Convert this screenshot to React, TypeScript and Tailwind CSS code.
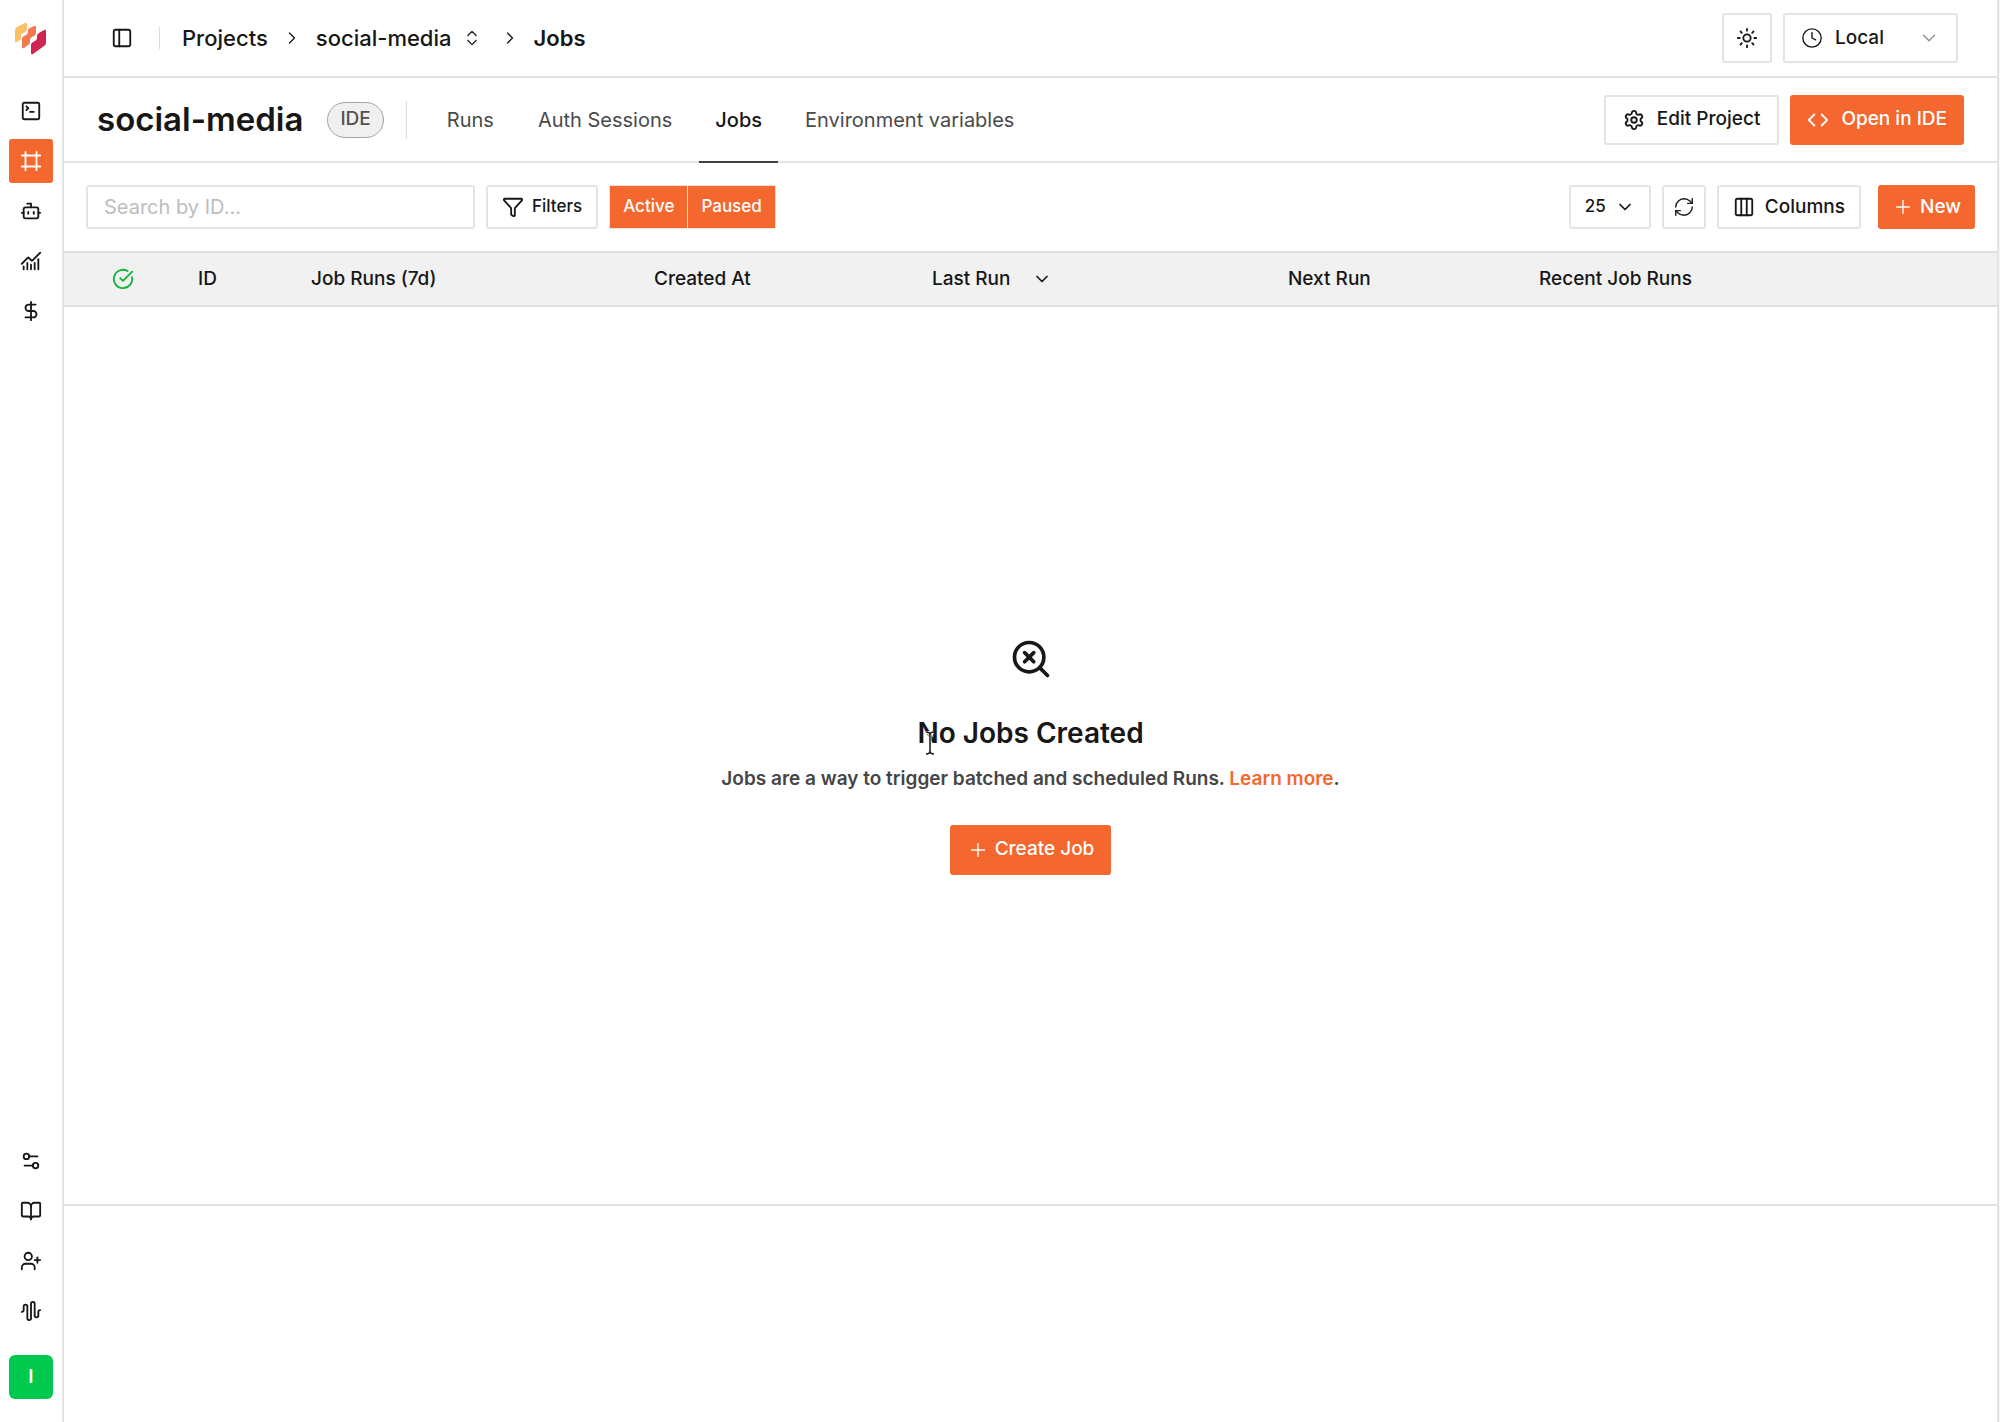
import React from 'react';
import {
  AudioWaveform,
  BookOpen,
  Bot,
  ChartNoAxesCombined,
  ChevronDown,
  ChevronRight,
  ChevronsUpDown,
  CircleCheckBig,
  Clock,
  Code,
  Columns3,
  DollarSign,
  Frame,
  Funnel,
  PanelLeft,
  Plus,
  RefreshCw,
  Settings,
  Settings2,
  SquareTerminal,
  Sun,
  UserPlus,
} from 'lucide-react';
import { cva } from 'class-variance-authority';
import { clsx } from 'clsx';

const button = cva('flex items-center justify-center rounded-[3px] font-medium', {
  variants: {
    variant: {
      outline: 'border-2 border-[#e4e4e4] bg-white text-[#171717]',
      primary: 'bg-[#f4672f] text-white',
    },
    size: {
      lg: 'h-[50px] px-[17px] text-[19px]',
      md: 'h-11 px-3.5 text-[19px]',
      sm: 'h-11 px-3.5 text-[17px]',
    },
  },
});

const mainNav = [
  { label: 'Playground', icon: SquareTerminal },
  { label: 'Projects', icon: Frame, active: true },
  { label: 'Agents', icon: Bot },
  { label: 'Usage', icon: ChartNoAxesCombined },
  { label: 'Billing', icon: DollarSign },
];

const footerNav = [
  { label: 'Settings', icon: Settings2 },
  { label: 'Docs', icon: BookOpen },
  { label: 'Invite', icon: UserPlus },
  { label: 'Status', icon: AudioWaveform },
];

const tabs = ['Runs', 'Auth Sessions', 'Jobs', 'Environment variables'];

const Logo = () => (
  <svg viewBox="0 0 34 34" className="h-[34px] w-[34px]" aria-hidden="true">
    <path d="M1 8Q1 6 3 5L11 1Q13 0 13 2V7Q13 9 11 10L9 11Q7 12 7 14V17L3 20Q1 21 1 19Z" fill="#fdc065" />
    <path d="M8 17Q8 15 10 14L12 13Q14 12 14 10V8Q14 7 16 6L20 4Q22 3 22 5V11Q22 13 20 14L18 15Q16 16 16 18V20Q16 22 14 23L10 26Q8 27 8 25Z" fill="#f2784f" />
    <path d="M17 23Q17 21 19 20L21 19Q23 18 23 16V14Q23 12 25 11L30 8Q32 7 32 9V21Q32 23 30 24L19 32Q17 33 17 31Z" fill="#d02552" />
  </svg>
);

const NavLink = ({ label, icon: Icon, active }: { label: string; icon: React.ElementType; active?: boolean }) => (
  <a
    href="#"
    aria-label={label}
    className={clsx(
      'flex h-11 w-11 items-center justify-center rounded-[3px]',
      active ? 'bg-[#f4672f] text-white' : 'text-[#171717]'
    )}
  >
    <Icon size={22} />
  </a>
);

const Sidebar = () => (
  <aside className="flex w-16 shrink-0 flex-col items-center border-r-2 border-[#e4e4e4] pb-[23px] pt-[22px]">
    <a href="#" aria-label="Home">
      <Logo />
    </a>
    <nav className="mt-[33px] flex flex-col gap-1.5">
      {mainNav.map((item) => (
        <NavLink key={item.label} {...item} />
      ))}
    </nav>
    <nav className="mt-auto flex flex-col gap-1.5">
      {footerNav.map((item) => (
        <NavLink key={item.label} {...item} />
      ))}
    </nav>
    <button className="mt-[22px] h-11 w-11 rounded-md bg-[#00c950] text-[19px] font-semibold text-white">I</button>
  </aside>
);

const TopBar = () => (
  <header className="flex h-[78px] items-center justify-between border-b-2 border-[#e4e4e4] pl-[47px] pr-[39px]">
    <div className="flex items-center">
      <button aria-label="Toggle sidebar">
        <PanelLeft size={22} />
      </button>
      <span className="ml-[26px] h-[22px] w-px bg-[#dcdcdc]"></span>
      <nav aria-label="Breadcrumb" className="ml-[22px] flex items-center text-[22px] font-medium">
        <a href="#">Projects</a>
        <ChevronRight size={20} strokeWidth={1.5} className="mx-3.5" />
        <button className="flex items-center gap-2.5">
          social-media
          <ChevronsUpDown size={20} strokeWidth={1.5} />
        </button>
        <ChevronRight size={20} strokeWidth={1.5} className="ml-[18px] mr-3.5" />
        <span className="font-semibold">Jobs</span>
      </nav>
    </div>
    <div className="flex items-center gap-[11px]">
      <button aria-label="Toggle theme" className={clsx(button({ variant: 'outline' }), 'h-[50px] w-[50px]')}>
        <Sun size={22} />
      </button>
      <label className="relative flex items-center">
        <Clock size={22} strokeWidth={1.5} className="pointer-events-none absolute left-[18px]" />
        <select
          aria-label="Time zone"
          className="h-[50px] w-[175px] appearance-none rounded-[3px] border-2 border-[#e4e4e4] bg-white pl-[50px] text-[19px] font-medium"
        >
          <option>Local</option>
          <option>UTC</option>
        </select>
        <ChevronDown size={22} strokeWidth={1.5} className="pointer-events-none absolute right-[18px] text-[#8f8f8f]" />
      </label>
    </div>
  </header>
);

const ProjectHeader = () => (
  <div className="flex h-[85px] justify-between border-b-2 border-[#e4e4e4] px-[33px]">
    <div className="flex items-center">
      <h1 className="text-[33px] font-semibold">social-media</h1>
      <span className="ml-6 flex h-9 items-center rounded-full border border-[#a3a3a3] bg-[#f0f0f0] px-3 text-[19px] font-medium text-[#525252]">
        IDE
      </span>
      <span className="ml-[22px] h-[38px] w-px bg-[#dcdcdc]"></span>
      <nav className="-mb-0.5 ml-[23px] flex gap-2.5 self-stretch text-[20px] text-[#4a4a4a]">
        {tabs.map((tab) => (
          <a
            key={tab}
            href="#"
            className={clsx(
              'flex items-center border-b-2',
              tab === 'Jobs' ? 'border-[#404040] px-4 font-medium text-[#171717]' : 'border-transparent px-[17px]'
            )}
          >
            {tab}
          </a>
        ))}
      </nav>
    </div>
    <div className="flex items-center gap-[11px]">
      <button className={clsx(button({ variant: 'outline', size: 'lg' }), 'gap-3')}>
        <Settings size={22} />
        Edit Project
      </button>
      <button className={clsx(button({ variant: 'primary', size: 'lg' }), 'gap-3')}>
        <Code size={22} />
        Open in IDE
      </button>
    </div>
  </div>
);

const Toolbar = () => (
  <div className="flex h-[88px] items-center justify-between px-[22px]">
    <div className="flex items-center gap-[11px]">
      <input
        type="text"
        aria-label="Search by ID"
        placeholder="Search by ID..."
        className="h-11 w-[389px] rounded-[3px] border-2 border-[#e4e4e4] px-4 text-[20px] placeholder:text-[#bdbdbd]"
      />
      <button className={clsx(button({ variant: 'outline', size: 'sm' }), 'gap-2')}>
        <Funnel size={22} />
        Filters
      </button>
      <div className="flex h-11 border border-[#e4e4e4] text-[17px] font-medium text-white">
        <button aria-pressed="true" className="border-r border-[#e4e4e4] bg-[#f4672f] px-[13px]">
          Active
        </button>
        <button aria-pressed="true" className="bg-[#f4672f] px-[13px]">
          Paused
        </button>
      </div>
    </div>
    <div className="flex items-center gap-[11px]">
      <label className="relative flex items-center">
        <select
          aria-label="Rows per page"
          className="h-11 w-[82px] appearance-none rounded-[3px] border-2 border-[#e4e4e4] bg-white pl-3.5 text-[17px] font-medium"
        >
          <option>25</option>
          <option>50</option>
        </select>
        <ChevronDown size={20} className="pointer-events-none absolute right-4" />
      </label>
      <button aria-label="Refresh" className={clsx(button({ variant: 'outline' }), 'h-11 w-11')}>
        <RefreshCw size={22} strokeWidth={1.5} />
      </button>
      <button className={clsx(button({ variant: 'outline', size: 'md' }), 'gap-2.5')}>
        <Columns3 size={22} />
        Columns
      </button>
      <button className={clsx(button({ variant: 'primary', size: 'md' }), 'ml-1.5 gap-1.5')}>
        <Plus size={22} strokeWidth={1.5} />
        New
      </button>
    </div>
  </div>
);

const JobsTable = () => (
  <table className="w-full table-fixed border-y-2 border-[#e0e0e0] bg-[#f1f1f1]">
    <thead>
      <tr className="h-[54px] text-left text-[19px]">
        <th className="w-[118px] pl-12">
          <CircleCheckBig size={22} className="text-[#12b336]" aria-label="Status" />
        </th>
        <th className="w-[113px] px-4 font-medium">ID</th>
        <th className="w-[343px] px-4 font-medium">Job Runs (7d)</th>
        <th className="w-[278px] px-4 font-medium">Created At</th>
        <th className="w-[356px] px-4 font-medium">
          <button className="flex items-center gap-[22px]">
            Last Run
            <ChevronDown size={20} />
          </button>
        </th>
        <th className="w-[251px] px-4 font-medium">Next Run</th>
        <th className="px-4 font-medium">Recent Job Runs</th>
      </tr>
    </thead>
  </table>
);

const EmptyState = () => (
  <section className="flex flex-1 flex-col items-center justify-center">
    <svg
      viewBox="0 0 24 24"
      className="h-11 w-11"
      fill="none"
      stroke="currentColor"
      strokeWidth="2"
      strokeLinecap="round"
      strokeLinejoin="round"
      aria-hidden="true"
    >
      <path d="m13.5 8.5-5 5M8.5 8.5l5 5" />
      <circle cx="11" cy="11" r="8" />
      <path d="m21 21-4.3-4.3" />
    </svg>
    <h2 className="relative mt-8 text-[28px] leading-10 font-semibold">
      No Jobs Created
      {/* text cursor */}
      <svg viewBox="0 0 10 24" className="absolute left-2 top-[18px] h-6 w-2.5" fill="none" aria-hidden="true">
        <path d="M1 1Q5 1 5 4Q5 1 9 1M5 4V20M1 23Q5 23 5 20Q5 23 9 23" stroke="#fff" strokeWidth="3" />
        <path d="M1 1Q5 1 5 4Q5 1 9 1M5 4V20M1 23Q5 23 5 20Q5 23 9 23" stroke="#171717" strokeWidth="1.5" />
      </svg>
    </h2>
    <p className="mt-3 text-[19px] leading-7 font-semibold text-[#454545]">
      Jobs are a way to trigger batched and scheduled Runs.{' '}
      <a href="#" className="text-[#f4672f]">
        Learn more
      </a>
      .
    </p>
    <button className={clsx(button({ variant: 'primary', size: 'lg' }), 'mt-8 gap-1.5')}>
      <Plus size={22} strokeWidth={1.5} />
      Create Job
    </button>
  </section>
);

const App = () => {
  return (
    <div className="flex min-h-screen bg-[#f5f5f5] pr-px font-[Inter,sans-serif] text-[#171717]">
      <div className="flex flex-1 border-r-2 border-[#e4e4e4] bg-white">
        <Sidebar />
        <main className="flex flex-1 flex-col">
          <TopBar />
          <ProjectHeader />
          <Toolbar />
          <JobsTable />
          <EmptyState />
          <footer className="h-[218px] border-t-2 border-[#e4e4e4]"></footer>
        </main>
      </div>
    </div>
  );
};

export default App;
